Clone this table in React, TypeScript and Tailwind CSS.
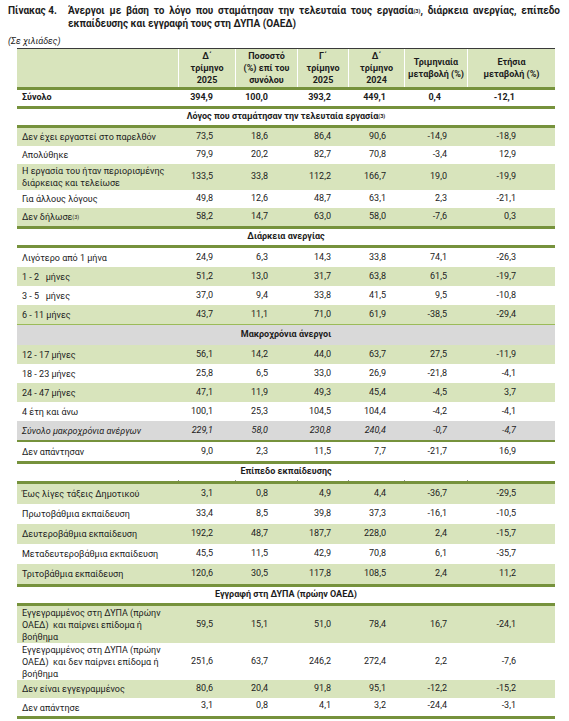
import React from 'react';

type Bg = 'g' | 'w' | 'gray';

interface Row {
  label: React.ReactNode;
  v: string[];
  bg: Bg;
  italic?: boolean;
  h?: string;
  lastTop?: boolean;
}

interface Section {
  title: React.ReactNode;
  gray?: boolean;
  ticks?: boolean;
  rowH: string;
  rows: Row[];
}

const COLS = 'grid grid-cols-[161px_57px_62px_51px_56px_63px_88px]';
const PR = ['pr-[22px]', 'pr-[29px]', 'pr-[17px]', 'pr-[18px]', 'pr-[20px]', 'pr-[39px]'];
const PR_TOTAL = ['pr-[22px]', 'pr-[29px]', 'pr-[17px]', 'pr-[18px]', 'pr-[26px]', 'pr-[40px]'];

const Sup = ({ children }: { children: React.ReactNode }) => (
  <sup className="text-[5.5px] relative -top-[1px]">{children}</sup>
);

const sections: Section[] = [
  {
    title: <>Λόγος που σταμάτησαν την τελευταία εργασία<Sup>(3)</Sup></>,
    rowH: 'h-[18px]',
    rows: [
      { label: 'Δεν έχει εργαστεί στο παρελθόν', v: ['73,5', '18,6', '86,4', '90,6', '-14,9', '-18,9'], bg: 'g' },
      { label: 'Απολύθηκε', v: ['79,9', '20,2', '82,7', '70,8', '-3,4', '12,9'], bg: 'w' },
      {
        label: <>Η εργασία του ήταν περιορισμένης<br />διάρκειας και τελείωσε</>,
        v: ['133,5', '33,8', '112,2', '166,7', '19,0', '-19,9'],
        bg: 'g',
        h: 'h-[26px]',
      },
      { label: 'Για άλλους λόγους', v: ['49,8', '12,6', '48,7', '63,1', '2,3', '-21,1'], bg: 'w' },
      { label: <>Δεν δήλωσε<Sup>(3)</Sup></>, v: ['58,2', '14,7', '63,0', '58,0', '-7,6', '0,3'], bg: 'g' },
    ],
  },
  {
    title: 'Διάρκεια ανεργίας',
    rowH: 'h-[19px]',
    rows: [
      { label: 'Λιγότερο από 1 μήνα', v: ['24,9', '6,3', '14,3', '33,8', '74,1', '-26,3'], bg: 'w' },
      { label: <>1 - 2&nbsp;&nbsp; μήνες</>, v: ['51,2', '13,0', '31,7', '63,8', '61,5', '-19,7'], bg: 'g' },
      { label: <>3 - 5&nbsp;&nbsp; μήνες</>, v: ['37,0', '9,4', '33,8', '41,5', '9,5', '-10,8'], bg: 'w' },
      { label: '6 - 11 μήνες', v: ['43,7', '11,1', '71,0', '61,9', '-38,5', '-29,4'], bg: 'g' },
    ],
  },
  {
    title: 'Μακροχρόνια άνεργοι',
    gray: true,
    rowH: 'h-[19px]',
    rows: [
      { label: '12 - 17 μήνες', v: ['56,1', '14,2', '44,0', '63,7', '27,5', '-11,9'], bg: 'g' },
      { label: '18 - 23 μήνες', v: ['25,8', '6,5', '33,0', '26,9', '-21,8', '-4,1'], bg: 'w' },
      { label: '24 - 47 μήνες', v: ['47,1', '11,9', '49,3', '45,4', '-4,5', '3,7'], bg: 'g' },
      { label: '4 έτη και άνω', v: ['100,1', '25,3', '104,5', '104,4', '-4,2', '-4,1'], bg: 'w' },
      { label: 'Σύνολο μακροχρόνια ανέργων', v: ['229,1', '58,0', '230,8', '240,4', '-0,7', '-4,7'], bg: 'gray', italic: true },
      { label: 'Δεν απάντησαν', v: ['9,0', '2,3', '11,5', '7,7', '-21,7', '16,9'], bg: 'w' },
    ],
  },
  {
    title: 'Επίπεδο εκπαίδευσης',
    ticks: true,
    rowH: 'h-[20px]',
    rows: [
      { label: 'Έως λίγες τάξεις Δημοτικού', v: ['3,1', '0,8', '4,9', '4,4', '-36,7', '-29,5'], bg: 'g' },
      { label: 'Πρωτοβάθμια εκπαίδευση', v: ['33,4', '8,5', '39,8', '37,3', '-16,1', '-10,5'], bg: 'w' },
      { label: 'Δευτεροβάθμια εκπαίδευση', v: ['192,2', '48,7', '187,7', '228,0', '2,4', '-15,7'], bg: 'g' },
      { label: 'Μεταδευτεροβάθμια εκπαίδευση', v: ['45,5', '11,5', '42,9', '70,8', '6,1', '-35,7'], bg: 'w' },
      { label: 'Τριτοβάθμια εκπαίδευση', v: ['120,6', '30,5', '117,8', '108,5', '2,4', '11,2'], bg: 'g' },
    ],
  },
  {
    title: 'Εγγραφή στη ΔΥΠΑ (πρώην ΟΑΕΔ)',
    rowH: 'h-[18px]',
    rows: [
      {
        label: <>Εγγεγραμμένος στη ΔΥΠΑ (πρώην<br />ΟΑΕΔ)&nbsp; και παίρνει επίδομα ή<br />βοήθημα</>,
        v: ['59,5', '15,1', '51,0', '78,4', '16,7', '-24,1'],
        bg: 'g',
        h: 'h-[37px]',
      },
      {
        label: <>Εγγεγραμμένος στη ΔΥΠΑ (πρώην<br />ΟΑΕΔ)&nbsp; και δεν παίρνει επίδομα ή<br />βοήθημα</>,
        v: ['251,6', '63,7', '246,2', '272,4', '2,2', '-7,6'],
        bg: 'w',
        h: 'h-[37px]',
      },
      { label: 'Δεν είναι εγγεγραμμένος', v: ['80,6', '20,4', '91,8', '95,1', '-12,2', '-15,2'], bg: 'g' },
      { label: 'Δεν απάντησε', v: ['3,1', '0,8', '4,1', '3,2', '-24,4', '-3,1'], bg: 'w', lastTop: true },
    ],
  },
];

const bgClass = (bg: Bg) =>
  bg === 'g' ? 'bg-[#d8e4bc]' : bg === 'gray' ? 'bg-[#d9d9d9]' : 'bg-white';

function DataRow({ row, h }: { row: Row; h: string }) {
  return (
    <div className={`${COLS} ${bgClass(row.bg)} ${row.h ?? h} ${row.italic ? 'italic' : ''}`}>
      <div className={`pl-[5px] leading-[12px] flex ${row.lastTop ? 'items-end pb-[2px]' : 'items-center'} whitespace-nowrap`}>
        <span>{row.label}</span>
      </div>
      {row.v.map((val, i) => (
        <div
          key={i}
          className={`flex justify-end ${row.lastTop ? 'items-start pt-[1px]' : 'items-center'} ${PR[i]}`}
        >
          {val}
        </div>
      ))}
    </div>
  );
}

export default function App() {
  return (
    <div className="w-[569px] h-[721px] bg-white text-[#1c1c1c] font-['Roboto','Noto_Sans',sans-serif] overflow-hidden">
      {/* Τίτλος με κρεμαστή εσοχή */}
      <div className="flex pt-[5px] pl-[8px] text-[10px] font-bold leading-[12px]">
        <div className="w-[60px] shrink-0 whitespace-nowrap">Πίνακας 4.</div>
        <div className="w-[492px]">
          <div className="whitespace-nowrap text-justify [text-align-last:justify]">
            Άνεργοι με βάση το λόγο που σταμάτησαν την τελευταία τους εργασία<Sup>(3)</Sup>, διάρκεια ανεργίας, επίπεδο
          </div>
          <div className="whitespace-nowrap pt-[1px]">εκπαίδευσης και εγγραφή τους στη ΔΥΠΑ (ΟΑΕΔ)</div>
        </div>
      </div>

      <div className="pl-[8px] pt-[6px] text-[9px] italic leading-[11px]">(Σε χιλιάδες)</div>

      <div className="ml-[17px] mt-[1px] w-[538px] text-[9px]">
        {/* Κεφαλίδα */}
        <div className={`${COLS} h-[39px] bg-[#d8e4bc] border-t border-[#3a3a3a] font-bold leading-[12px] text-center`}>
          <div />
          <div className="flex items-center justify-center border-l border-white">Δ΄<br />τρίμηνο<br />2025</div>
          <div className="flex items-center justify-center border-l border-white">Ποσοστό<br />(%) επί του<br />συνόλου</div>
          <div className="flex items-center justify-center border-l border-white">Γ΄<br />τρίμηνο<br />2025</div>
          <div className="flex items-center justify-center border-l border-white">Δ΄<br />τρίμηνο<br />2024</div>
          <div className="flex items-center justify-center border-l border-white">Τριμηνιαία<br />μεταβολή (%)</div>
          <div className="flex items-center justify-center border-l border-white">Ετήσια<br />μεταβολή (%)</div>
        </div>
        <div className="h-[3px] bg-[#76923c]" />

        {/* Σύνολο */}
        <div className={`${COLS} h-[16px] font-bold`}>
          <div className="pl-[5px] flex items-center">Σύνολο</div>
          {['394,9', '100,0', '393,2', '449,1', '0,4', '-12,1'].map((v, i) => (
            <div key={i} className={`flex items-center justify-end ${PR_TOTAL[i]}`}>{v}</div>
          ))}
        </div>
        <div className="h-[3px] bg-[#76923c]" />

        {sections.map((s, si) => (
          <div key={si}>
            {s.gray ? (
              <>
                <div className="h-px bg-[#9bbb59]" />
                <div className="h-[20px] bg-[#d9d9d9] flex items-start pt-[3px] justify-center font-bold">{s.title}</div>
              </>
            ) : (
              <>
                <div className="h-[16px] flex items-center justify-center font-bold">{s.title}</div>
                {s.ticks && (
                  <div className={`${COLS} h-[1px]`}>
                    <div />
                    <div className="border-l border-[#8c8c8c]" />
                    <div className="border-l border-[#8c8c8c]" />
                    <div className="border-l border-[#8c8c8c]" />
                    <div className="border-l border-[#8c8c8c]" />
                    <div className="border-l border-[#8c8c8c]" />
                    <div className="border-l border-[#8c8c8c]" />
                  </div>
                )}
                <div className="h-[3px] bg-[#76923c]" />
              </>
            )}
            {s.rows.map((r, ri) => (
              <React.Fragment key={ri}>
                {s.gray && ri === s.rows.length - 1 && <div className="h-[2px] bg-[#76923c]" />}
                <DataRow row={r} h={s.rowH} />
              </React.Fragment>
            ))}
            {si !== 1 && <div className="h-[3px] bg-[#76923c]" />}
          </div>
        ))}
      </div>
    </div>
  );
}
